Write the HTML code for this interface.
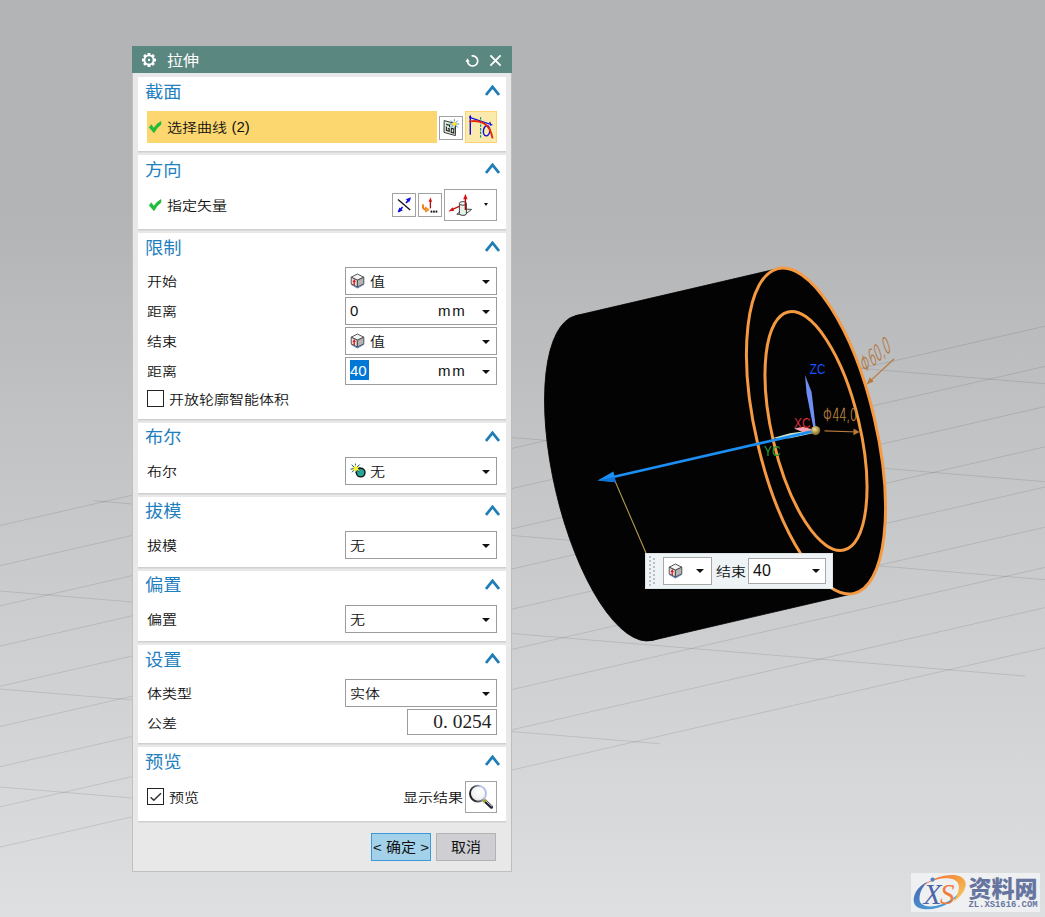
<!DOCTYPE html>
<html lang="zh-CN">
<head>
<meta charset="utf-8">
<title>拉伸</title>
<style>
html,body{margin:0;padding:0;}
body{width:1045px;height:917px;overflow:hidden;position:relative;
  font-family:"Liberation Sans","Noto Sans CJK SC",sans-serif;font-size:15px;color:#111;
  background:linear-gradient(to bottom,#b3b4b6 0px,#b3b4b6 215px,#c3c4c6 450px,#d1d2d4 700px,#dedfe1 917px);}
#scene{position:absolute;left:0;top:0;width:1045px;height:917px;}
.abs{position:absolute;}
#dlg{position:absolute;left:132px;top:46px;width:380px;height:826px;background:#e8e8e8;box-sizing:border-box;
  border-left:1px solid #c0c0c0;border-right:1px solid #bdbdbd;border-bottom:1px solid #c0c0c0;}
#tbar{position:absolute;left:132px;top:46px;width:380px;height:27px;background:#5b8781;}
#tbar .ttl{position:absolute;left:35px;top:1px;height:27px;line-height:27px;font-size:16px;color:#fff;transform-origin:0 22px;transform:scaleY(0.95);}
.sec{position:absolute;left:138px;width:368px;background:#fff;box-shadow:0 1.5px 0 #cfcfcf;}
.st{position:absolute;left:144.5px;font-size:18px;line-height:24px;color:#1f80c0;white-space:nowrap;transform-origin:0 20px;transform:scale(1.015,0.95);}
.lb{position:absolute;font-size:15px;line-height:20px;color:#111;white-space:nowrap;transform-origin:0 17.4px;transform:scaleY(0.86);font-weight:350;}
.lat{transform:none !important;}
.chev{position:absolute;left:485px;width:15px;height:11px;}
.dd{position:absolute;left:345px;width:152px;height:28px;box-sizing:border-box;border:1px solid #9c9c9c;background:#fff;}
.dd .tx{position:absolute;top:3px;line-height:20px;font-size:15px;white-space:nowrap;transform-origin:0 17.4px;transform:scaleY(0.86);font-weight:350;}
.arr{position:absolute;width:0;height:0;border-left:4px solid transparent;border-right:4px solid transparent;border-top:4px solid #111;}
.ib{position:absolute;box-sizing:border-box;border:1px solid #a2a2a2;background:#fff;}
.cb{position:absolute;left:147px;width:17px;height:17px;box-sizing:border-box;border:1px solid #222;background:#fff;}
</style>
</head>
<body>
<svg id="scene" width="1045" height="917" viewBox="0 0 1045 917">
<g stroke="#000" stroke-opacity="0.1" stroke-width="1" fill="none">
<line x1="0.0" y1="525.5" x2="400.0" y2="433.8"/>
<line x1="0.0" y1="565.7" x2="1045.0" y2="326.2"/>
<line x1="0.0" y1="605.9" x2="1045.0" y2="366.4"/>
<line x1="0.0" y1="646.1" x2="1045.0" y2="406.6"/>
<line x1="0.0" y1="686.3" x2="1045.0" y2="446.8"/>
<line x1="0.0" y1="726.5" x2="1045.0" y2="487.0"/>
<line x1="0.0" y1="766.7" x2="1045.0" y2="527.2"/>
<line x1="0.0" y1="806.9" x2="1045.0" y2="567.4"/>
<line x1="0.0" y1="847.1" x2="1045.0" y2="607.6"/>
<line x1="300.0" y1="818.5" x2="1045.0" y2="647.8"/>
<line x1="734.0" y1="357.9" x2="1045.0" y2="383.7"/>
<line x1="420.0" y1="429.9" x2="1045.0" y2="481.7"/>
<line x1="94.0" y1="500.8" x2="1045.0" y2="579.7"/>
<line x1="0.0" y1="591.0" x2="1025.0" y2="676.1"/>
<line x1="0.0" y1="689.0" x2="660.0" y2="743.8"/>
<line x1="0.0" y1="787.0" x2="330.0" y2="814.4"/>
</g>

<g id="model">
<g fill="#030303" stroke="#030303" stroke-width="0.8">
<ellipse cx="614" cy="478" rx="59.7" ry="166.8" transform="rotate(-13.19 614 478)"/>
<ellipse cx="816" cy="431" rx="59.7" ry="166.8" transform="rotate(-13.19 816 431)"/>
<polygon points="575.9,315.6 777.9,268.6 854.1,593.4 652.1,640.4"/>
</g>
<g fill="none" stroke="#f59a42" stroke-width="3">
<ellipse cx="816" cy="431" rx="59.7" ry="166.8" transform="rotate(-13.19 816 431)"/>
<ellipse cx="816" cy="431" rx="43.8" ry="122.3" transform="rotate(-13.19 816 431)"/>
</g>
</g>
<defs>
<radialGradient id="gold" cx="0.4" cy="0.35" r="0.7"><stop offset="0" stop-color="#f0e0a0"/><stop offset="0.5" stop-color="#b89c50"/><stop offset="1" stop-color="#6a5520"/></radialGradient>
<linearGradient id="bshaft" x1="0" y1="0" x2="0" y2="1"><stop offset="0" stop-color="#2aa0ff"/><stop offset="1" stop-color="#0b7ae6"/></linearGradient>
</defs>
<!-- thin leader line -->
<line x1="615" y1="481" x2="646" y2="553" stroke="#b39a4a" stroke-width="1.1"/>
<!-- Y cone (pale green) -->
<polygon points="814,430 790,433.2 772,438.2 790,438.2 814,433" fill="#cfe6c4"/>
<!-- X cone (pink) -->
<polygon points="794,428.6 803,426.8 812,429.2 812,431.4 803,432.2" fill="#f3a2ac"/>
<!-- blue direction arrow -->
<line x1="815.6" y1="430.6" x2="613" y2="477" stroke="#1c8ff5" stroke-width="2.7"/>
<polygon points="597.5,480.6 613.4,471.6 615.8,482.2" fill="#1c8ff5"/>
<polygon points="597.5,480.6 614.6,477 615.8,482.2" fill="#0f74d6"/>
<!-- Z cone -->
<polygon points="805,375 811.6,392 815.8,428 813.4,428 806.6,393.5" fill="#6f8ff6"/>
<!-- origin sphere -->
<circle cx="815.6" cy="430.6" r="4.6" fill="url(#gold)"/>
<!-- axis labels -->
<g font-family="Liberation Sans, sans-serif" font-size="14.3">
<text x="809.8" y="374" fill="#1450ff" textLength="15.5" lengthAdjust="spacingAndGlyphs">ZC</text>
<text x="794" y="427.5" fill="#d62a38" textLength="16.5" lengthAdjust="spacingAndGlyphs">XC</text>
<text x="764" y="456.3" fill="#2aa12e" textLength="16.5" lengthAdjust="spacingAndGlyphs">YC</text>
</g>
<!-- dimensions -->
<g fill="none" stroke="#b8793c" stroke-width="1.2">
<line x1="824.5" y1="430.8" x2="858" y2="432"/>
<line x1="894" y1="359" x2="868.5" y2="382.6"/>
</g>
<polygon points="859.5,432 853.6,428.6 853.4,435.2" fill="#b8793c"/>
<polygon points="866.6,384.4 873.6,381.6 869.8,377.2" fill="#b8793c"/>
<text x="0" y="0" font-family="DejaVu Sans, Liberation Sans, sans-serif" font-weight="200" font-size="17" fill="#c08844" stroke="#c08844" stroke-width="0.35" textLength="34" lengthAdjust="spacingAndGlyphs" transform="translate(823 421.3)">Φ44,0</text>
<text x="0" y="0" font-family="DejaVu Sans, Liberation Sans, sans-serif" font-weight="200" font-size="17" fill="#b2763a" stroke="#b2763a" stroke-width="0.35" textLength="36" lengthAdjust="spacingAndGlyphs" transform="matrix(0.766 -0.643 0.42 1.2 864.2 373.4)">Φ60,0</text>
<!--TRIAD2-->
</svg>
<div id="dlg"></div>
<div id="tbar"><span class="ttl">拉伸</span></div>
<!-- section backgrounds -->
<div class="sec" style="top:77px;height:74px"></div>
<div class="sec" style="top:155px;height:74px"></div>
<div class="sec" style="top:233px;height:186px"></div>
<div class="sec" style="top:423px;height:70px"></div>
<div class="sec" style="top:497px;height:70px"></div>
<div class="sec" style="top:571px;height:70px"></div>
<div class="sec" style="top:645px;height:98px"></div>
<div class="sec" style="top:747px;height:74px"></div>

<!-- section titles -->
<div class="st" style="top:80px">截面</div>
<div class="st" style="top:158px">方向</div>
<div class="st" style="top:236px">限制</div>
<div class="st" style="top:425px">布尔</div>
<div class="st" style="top:499px">拔模</div>
<div class="st" style="top:573px">偏置</div>
<div class="st" style="top:648px">设置</div>
<div class="st" style="top:750px">预览</div>

<!-- chevrons -->
<svg class="chev" style="top:85px" viewBox="0 0 15 11"><path d="M1 10 L7.5 1.8 L14 10" fill="none" stroke="#1f7db5" stroke-width="2.7"/></svg>
<svg class="chev" style="top:163px" viewBox="0 0 15 11"><path d="M1 10 L7.5 1.8 L14 10" fill="none" stroke="#1f7db5" stroke-width="2.7"/></svg>
<svg class="chev" style="top:241px" viewBox="0 0 15 11"><path d="M1 10 L7.5 1.8 L14 10" fill="none" stroke="#1f7db5" stroke-width="2.7"/></svg>
<svg class="chev" style="top:431px" viewBox="0 0 15 11"><path d="M1 10 L7.5 1.8 L14 10" fill="none" stroke="#1f7db5" stroke-width="2.7"/></svg>
<svg class="chev" style="top:505px" viewBox="0 0 15 11"><path d="M1 10 L7.5 1.8 L14 10" fill="none" stroke="#1f7db5" stroke-width="2.7"/></svg>
<svg class="chev" style="top:579px" viewBox="0 0 15 11"><path d="M1 10 L7.5 1.8 L14 10" fill="none" stroke="#1f7db5" stroke-width="2.7"/></svg>
<svg class="chev" style="top:653px" viewBox="0 0 15 11"><path d="M1 10 L7.5 1.8 L14 10" fill="none" stroke="#1f7db5" stroke-width="2.7"/></svg>
<svg class="chev" style="top:755px" viewBox="0 0 15 11"><path d="M1 10 L7.5 1.8 L14 10" fill="none" stroke="#1f7db5" stroke-width="2.7"/></svg>

<!-- S1: 截面 -->
<div class="abs" style="left:147px;top:111px;width:290px;height:32px;background:#fcd76f"></div>
<div class="lb" style="left:167px;top:117px">选择曲线</div><div class="lb lat" style="left:231.5px;top:117px">(2)</div>
<div class="ib" style="left:439px;top:116px;width:24px;height:24px"></div>
<div class="abs" style="left:465px;top:111px;width:32px;height:32px;box-sizing:border-box;background:#fbeaab;border:1px solid #fcd36c"></div>

<!-- S2: 方向 -->
<div class="lb" style="left:167px;top:195px">指定矢量</div>
<div class="ib" style="left:392px;top:193px;width:24px;height:24px"></div>
<div class="ib" style="left:418px;top:193px;width:24px;height:24px"></div>
<div class="ib" style="left:444px;top:189px;width:53px;height:32px"></div>
<div class="arr" style="left:484px;top:203px;border-left-width:2.75px;border-right-width:2.75px;border-top-width:3px"></div>

<!-- S3: 限制 -->
<div class="lb" style="left:147px;top:271px">开始</div>
<div class="lb" style="left:147px;top:301px">距离</div>
<div class="lb" style="left:147px;top:331px">结束</div>
<div class="lb" style="left:147px;top:361px">距离</div>
<div class="dd" style="top:267px"><span class="tx" style="left:24px">值</span><div class="arr" style="left:136px;top:12px"></div></div>
<div class="dd" style="top:297px"><span class="tx lat" style="left:4px">0</span><span class="tx lat" style="left:92px;letter-spacing:1.8px">mm</span><div class="arr" style="left:136px;top:12px"></div></div>
<div class="dd" style="top:327px"><span class="tx" style="left:24px">值</span><div class="arr" style="left:136px;top:12px"></div></div>
<div class="dd" style="top:357px"><div class="abs" style="left:4px;top:2px;width:19px;height:20px;background:#0078d7"></div><span class="tx lat" style="left:4px;color:#fff">40</span><span class="tx lat" style="left:92px;letter-spacing:1.8px">mm</span><div class="arr" style="left:136px;top:12px"></div></div>
<div class="cb" style="top:390px"></div>
<div class="lb" style="left:169px;top:389px">开放轮廓智能体积</div>

<!-- S4: 布尔 -->
<div class="lb" style="left:147px;top:461px">布尔</div>
<div class="dd" style="top:457px"><span class="tx" style="left:24px">无</span><div class="arr" style="left:136px;top:12px"></div></div>

<!-- S5: 拔模 -->
<div class="lb" style="left:147px;top:535px">拔模</div>
<div class="dd" style="top:531px"><span class="tx" style="left:4px">无</span><div class="arr" style="left:136px;top:12px"></div></div>

<!-- S6: 偏置 -->
<div class="lb" style="left:147px;top:609px">偏置</div>
<div class="dd" style="top:605px"><span class="tx" style="left:4px">无</span><div class="arr" style="left:136px;top:12px"></div></div>

<!-- S7: 设置 -->
<div class="lb" style="left:147px;top:683px">体类型</div>
<div class="dd" style="top:679px"><span class="tx" style="left:4px">实体</span><div class="arr" style="left:136px;top:12px"></div></div>
<div class="lb" style="left:147px;top:713px">公差</div>
<div class="ib" style="left:407px;top:709px;width:90px;height:26px;border-color:#9c9c9c"></div>
<div class="abs" id="tol" style="left:407px;top:709px;width:84.5px;height:26px;line-height:26px;text-align:right;font-family:'Liberation Serif','Noto Serif CJK SC',serif;font-size:19.4px;color:#222;white-space:nowrap">0<span style="letter-spacing:4.9px">.</span>0254</div>

<!-- S8: 预览 -->
<div class="cb" style="top:788px"></div>
<svg class="abs" style="left:147px;top:788px" width="17" height="17" viewBox="0 0 17 17"><path d="M3.6 9.2 L6.8 12.2 L14 5.2" fill="none" stroke="#333" stroke-width="1.5"/></svg>
<div class="lb" style="left:169px;top:787px">预览</div>
<div class="lb" style="left:403px;top:787px">显示结果</div>
<div class="ib" style="left:465px;top:781px;width:32px;height:32px"></div>

<!-- buttons -->
<div class="abs" style="left:371px;top:833px;width:60px;height:28px;box-sizing:border-box;background:#a3d1ea;border:1px solid #3b9bd9;text-align:center;line-height:26px;font-size:15px;white-space:nowrap"><span style="display:inline-block;transform-origin:0 20px;transform:scaleY(0.9)">&lt; 确定 &gt;</span></div>
<div class="abs" style="left:436px;top:833px;width:60px;height:28px;box-sizing:border-box;background:#cfcfd3;border:1px solid #b3b3b3;text-align:center;line-height:26px;font-size:15px;white-space:nowrap"><span style="display:inline-block;transform-origin:0 20px;transform:scaleY(0.9)">取消</span></div>
<!-- title bar icons -->
<svg class="abs" style="left:141px;top:52px" width="16" height="16" viewBox="0 0 16 16">
<g transform="translate(8 7.9)"><g fill="#fff">
<rect x="-1.5" y="-7" width="3" height="14" rx="0.5"/>
<rect x="-1.5" y="-7" width="3" height="14" rx="0.5" transform="rotate(45)"/>
<rect x="-1.5" y="-7" width="3" height="14" rx="0.5" transform="rotate(90)"/>
<rect x="-1.5" y="-7" width="3" height="14" rx="0.5" transform="rotate(135)"/>
<circle r="5.5"/></g>
<circle r="3.6" fill="#5b8781"/><rect x="-1" y="-1" width="2" height="2" fill="#fff"/></g></svg>
<svg class="abs" style="left:464px;top:52px" width="18" height="18" viewBox="0 0 18 18">
<path d="M7.6 3.9 A5.1 5.1 0 1 1 3.55 9.4" fill="none" stroke="#fff" stroke-width="1.7" stroke-linecap="butt"/>
<polygon points="1.4,9.8 3.5,6.2 5.7,9.8" fill="#fff"/></svg>
<svg class="abs" style="left:489px;top:54px" width="13" height="13" viewBox="0 0 13 13"><path d="M1.4 1.4 L11.6 11.6 M11.6 1.4 L1.4 11.6" stroke="#fff" stroke-width="1.9" fill="none"/></svg>

<!-- green checks -->
<svg class="abs" style="left:148px;top:120px" width="15" height="15" viewBox="0 0 15 15"><path d="M1.2 7.4 L3.3 4.7 L5.7 8.2 Q8.6 3.6 12.9 1.5 L13 4.4 Q8.6 7.4 6 12.8 Z" fill="#1cc038" stroke="#14a42e" stroke-width="0.5"/></svg>
<svg class="abs" style="left:148px;top:198px" width="15" height="15" viewBox="0 0 15 15"><path d="M1.2 7.4 L3.3 4.7 L5.7 8.2 Q8.6 3.6 12.9 1.5 L13 4.4 Q8.6 7.4 6 12.8 Z" fill="#1cc038" stroke="#14a42e" stroke-width="0.5"/></svg>

<!-- sketch section icon (439,116) 24x24 -->
<svg class="abs" style="left:439px;top:116px" width="24" height="24" viewBox="0 0 24 24">
<polygon points="5.2,4.6 16.6,7.6 16.4,19.6 5,16.4" fill="#dcecdc" stroke="#3a3a3a" stroke-width="1"/>
<path d="M7.2 8.4 L10.6 9.2 L10.6 11.2 M7.4 10.4 L7.4 14.4 L10.2 15.2 L10.2 12.8 L8.8 12.6 M12.4 12.4 L14.8 13 L14.8 17 L12.2 16.4 Z" fill="none" stroke="#222" stroke-width="1.1"/>
<g stroke="#4a86d8" stroke-width="1"><path d="M15.4 3.2 L15.4 13 M10.6 8 L20.2 8 M12 4.6 L18.8 11.4 M18.8 4.6 L12 11.4"/></g>
<polygon points="15.4,4.6 16.5,7 19,8 16.5,9 15.4,11.6 14.3,9 11.8,8 14.3,7" fill="#ffe92e"/>
</svg>

<!-- curve icon (465,111) 32x32 -->
<svg class="abs" style="left:465px;top:111px" width="32" height="32" viewBox="0 0 32 32">
<path d="M5.3 5 L5.3 23.8" stroke="#0a0ae6" stroke-width="1.4" fill="none"/>
<path d="M4.6 6.4 L27.4 14 M24.8 10.8 L25.8 14.6" stroke="#0a0ae6" stroke-width="1.25" fill="none"/>
<polygon points="5.3,3.4 4,6.8 6.6,6.8" fill="#0a0ae6"/>
<ellipse cx="21.6" cy="19.8" rx="3.2" ry="5.1" fill="none" stroke="#0a0ae6" stroke-width="1.4" transform="rotate(6 21.6 19.8)"/>
<path d="M15.6 6.2 L15.6 27" stroke="#0a8a86" stroke-width="1.2" stroke-dasharray="2.4 1.2" fill="none"/>
<path d="M5.2 10.4 Q12 9.2 18 11.8 Q25 15 27.4 26.6" stroke="#e0280c" stroke-width="1.9" fill="none" stroke-linecap="round"/>
</svg>

<!-- reverse direction (392,193) -->
<svg class="abs" style="left:392px;top:193px" width="24" height="24" viewBox="0 0 24 24">
<path d="M6.6 18.6 L10.6 14 M14 10 L18 5.4" stroke="#1010d8" stroke-width="1.7" fill="none"/>
<polygon points="19,4.2 13.8,6.2 17.2,9.2" fill="#1010d8"/>
<polygon points="5.6,19.6 10.8,17.6 7.4,14.6" fill="#1010d8"/>
<path d="M6 6.4 L18.2 17" stroke="#111" stroke-width="1.3" fill="none"/>
</svg>

<!-- vector dialog (418,193) -->
<svg class="abs" style="left:418px;top:193px" width="24" height="24" viewBox="0 0 24 24">
<path d="M12.4 15.4 L12.4 7.4" stroke="#b00c0c" stroke-width="1.3" fill="none"/>
<polygon points="12.4,4.6 10.6,8.8 14.2,8.8" fill="#d01414"/>
<path d="M5 11.4 Q4.2 16.4 8 16.6" stroke="#f07818" stroke-width="2" fill="none"/>
<polygon points="7.6,14 11.2,16.8 7.6,19" fill="#f8b020" stroke="#e86a10" stroke-width="0.7"/>
<rect x="12.6" y="17.6" width="1.7" height="2" fill="#111"/><rect x="15.1" y="17.6" width="1.7" height="2" fill="#111"/><rect x="17.6" y="17.6" width="1.7" height="2" fill="#111"/>
</svg>

<!-- inferred vector (444,189) -->
<svg class="abs" style="left:444px;top:189px" width="40" height="32" viewBox="0 0 40 32">
<polygon points="12.8,25.2 19.6,20 27.6,20.4 20.8,25.8" fill="#f2f6f2" stroke="#333" stroke-width="0.9"/>
<path d="M15.4 14.4 L15.4 24.6 A3.5 1.8 0 0 0 22.4 24.6 L22.4 14.4" fill="#e4f3e4" stroke="#2a2a2a" stroke-width="0.9"/>
<ellipse cx="18.9" cy="14.4" rx="3.5" ry="1.8" fill="#f6fbf6" stroke="#2a2a2a" stroke-width="0.9"/>
<path d="M21.4 21 L21.4 9" stroke="#a80808" stroke-width="1.4" fill="none"/>
<polygon points="21.4,4.8 19.2,10.2 23.6,10.2" fill="#d81414"/>
<path d="M15.8 17.2 L8 20.6" stroke="#c01010" stroke-width="1.3" fill="none"/>
<polygon points="4.4,22.4 8.6,18.2 10.2,21.8" fill="#d01414"/>
</svg>
<!-- cube icons -->
<svg class="abs cube" style="left:350px;top:273px" width="15" height="16" viewBox="0 0 15 16">
<polygon points="1,11 7.4,14.6 14,11 14,11.8 7.4,15.6 1,11.8" fill="#4a78c8"/>
<polygon points="1.2,4.2 7.4,1 13.8,4.2 7.4,7.2" fill="#f4f4f4" stroke="#444" stroke-width="0.9" stroke-linejoin="round"/>
<polygon points="1.2,4.2 7.4,7.2 7.4,14 1.2,10.8" fill="#dedede" stroke="#444" stroke-width="0.9" stroke-linejoin="round"/>
<polygon points="13.8,4.2 7.4,7.2 7.4,14 13.8,10.8" fill="#b4b4b4" stroke="#444" stroke-width="0.9" stroke-linejoin="round"/>
<path d="M4.2 12 L4.2 8.4" stroke="#e81010" stroke-width="1.3"/><polygon points="4.2,6 2.6,9 5.8,9" fill="#e81010"/>
</svg>
<svg class="abs cube" style="left:350px;top:333px" width="15" height="16" viewBox="0 0 15 16">
<polygon points="1,11 7.4,14.6 14,11 14,11.8 7.4,15.6 1,11.8" fill="#4a78c8"/>
<polygon points="1.2,4.2 7.4,1 13.8,4.2 7.4,7.2" fill="#f4f4f4" stroke="#444" stroke-width="0.9" stroke-linejoin="round"/>
<polygon points="1.2,4.2 7.4,7.2 7.4,14 1.2,10.8" fill="#dedede" stroke="#444" stroke-width="0.9" stroke-linejoin="round"/>
<polygon points="13.8,4.2 7.4,7.2 7.4,14 13.8,10.8" fill="#b4b4b4" stroke="#444" stroke-width="0.9" stroke-linejoin="round"/>
<path d="M4.2 12 L4.2 8.4" stroke="#e81010" stroke-width="1.3"/><polygon points="4.2,6 2.6,9 5.8,9" fill="#e81010"/>
</svg>
<svg class="abs cube" style="left:668px;top:563px;z-index:5" width="15" height="16" viewBox="0 0 15 16">
<polygon points="1,11 7.4,14.6 14,11 14,11.8 7.4,15.6 1,11.8" fill="#4a78c8"/>
<polygon points="1.2,4.2 7.4,1 13.8,4.2 7.4,7.2" fill="#f4f4f4" stroke="#444" stroke-width="0.9" stroke-linejoin="round"/>
<polygon points="1.2,4.2 7.4,7.2 7.4,14 1.2,10.8" fill="#dedede" stroke="#444" stroke-width="0.9" stroke-linejoin="round"/>
<polygon points="13.8,4.2 7.4,7.2 7.4,14 13.8,10.8" fill="#b4b4b4" stroke="#444" stroke-width="0.9" stroke-linejoin="round"/>
<path d="M4.2 12 L4.2 8.4" stroke="#e81010" stroke-width="1.3"/><polygon points="4.2,6 2.6,9 5.8,9" fill="#e81010"/>
</svg>


<!-- bool none icon -->
<svg class="abs" style="left:349px;top:462px" width="18" height="18" viewBox="0 0 18 18">
<circle cx="11.7" cy="10.6" r="4.3" fill="#27a79a" stroke="#111" stroke-width="1.4"/>
<g stroke="#0a4a8c" stroke-width="1"><path d="M6.4 1.6 L6.8 11.2 M1.6 7.2 L11.4 5.6 M2.6 2.8 L10.4 10 M10.6 2.6 L3 10.2"/></g>
<polygon points="6.6,2.6 7.8,5.2 10.6,4.4 8.8,6.6 10.6,8.8 7.8,8.2 6.8,10.6 5.8,8 3,8.8 4.8,6.6 3,4.4 5.6,5.2" fill="#fff22a"/>
</svg>

<!-- magnifier -->
<svg class="abs" style="left:465px;top:781px" width="32" height="32" viewBox="0 0 32 32">
<defs><radialGradient id="lens" cx="0.62" cy="0.35" r="0.8"><stop offset="0" stop-color="#ffffff"/><stop offset="0.6" stop-color="#f2f2f2"/><stop offset="1" stop-color="#cfcfcf"/></radialGradient>
<linearGradient id="ring" x1="0" y1="0.6" x2="1" y2="0.3"><stop offset="0" stop-color="#16181c"/><stop offset="0.45" stop-color="#5a5e66"/><stop offset="0.8" stop-color="#b8c8ea"/><stop offset="1" stop-color="#a8bce6"/></linearGradient></defs>
<path d="M19.4 19.6 L26.4 26" stroke="#20242c" stroke-width="3.4" stroke-linecap="round"/>
<path d="M20.4 19.4 L26.8 25.2" stroke="#dfe3ea" stroke-width="1" stroke-linecap="round"/>
<path d="M18.4 18.6 L20.6 20.6" stroke="#e89a10" stroke-width="3.6"/>
<circle cx="13" cy="12.6" r="8" fill="url(#lens)" stroke="url(#ring)" stroke-width="1.9"/>
<circle cx="19.3" cy="19.6" r="0.9" fill="#30d040"/>
</svg>
<!--ICONS3-->
<div class="abs" style="left:645px;top:553px;width:188px;height:36px;box-sizing:border-box;background:#eef4f6;border:1px solid #dbe3e6"></div>
<svg class="abs" style="left:647px;top:555px" width="10" height="32" viewBox="0 0 10 32"><g fill="#b9c0c4"><rect x="2" y="1" width="2" height="2"/><rect x="6" y="3" width="2" height="2"/><rect x="2" y="5" width="2" height="2"/><rect x="6" y="7" width="2" height="2"/><rect x="2" y="9" width="2" height="2"/><rect x="6" y="11" width="2" height="2"/><rect x="2" y="13" width="2" height="2"/><rect x="6" y="15" width="2" height="2"/><rect x="2" y="17" width="2" height="2"/><rect x="6" y="19" width="2" height="2"/><rect x="2" y="21" width="2" height="2"/><rect x="6" y="23" width="2" height="2"/><rect x="2" y="25" width="2" height="2"/><rect x="6" y="27" width="2" height="2"/><rect x="2" y="29" width="2" height="2"/></g></svg>
<div class="ib" style="left:663px;top:557px;width:49px;height:28px;border-color:#a8a8a8"></div>
<div class="arr" style="left:696px;top:569px"></div>
<div class="lb" style="left:716px;top:561px">结束</div>
<div class="ib" style="left:748px;top:558px;width:78px;height:26px;border-color:#a8a8a8"></div>
<div class="lb lat" style="left:753px;top:561px;font-size:16px">40</div>
<div class="arr" style="left:812px;top:569px"></div>

<div class="abs" style="left:911px;top:873px;width:129px;height:39px;background:#eff0f1"></div>
<svg class="abs" style="left:911px;top:873px" width="129" height="39" viewBox="0 0 129 39">
<defs>
<linearGradient id="wmb" x1="0" y1="0" x2="1" y2="1"><stop offset="0" stop-color="#4a63ad"/><stop offset="1" stop-color="#49b4ea"/></linearGradient>
<linearGradient id="wmo" x1="0" y1="0" x2="1" y2="1"><stop offset="0" stop-color="#ee6a48"/><stop offset="0.5" stop-color="#f4a040"/><stop offset="1" stop-color="#f6cc66"/></linearGradient>
</defs>
<!-- blue crescent (left/bottom) -->
<path d="M17 8.5 C6 13 0.5 24 3.5 31 C7 38.5 25 38 38 30 C47 24.5 53 17 54 11 C50 20 41 27.500 30 31.500 C18 35.500 8.500 33 8.500 26 C8.500 19 12 13 17 8.500 Z" fill="url(#wmb)"/>
<!-- orange crescent (top/right) -->
<path d="M12 13 C20 5 36 0.500 46 2.500 C54 4 56.500 10 53.500 16.500 C51.500 21 47 26 42 29 C46 23 49 17 47.500 11.500 C46 5.500 36 4 26 6.500 C20 8 15 10.500 12 13 Z" fill="url(#wmo)"/>
<circle cx="21.6" cy="6.600" r="2.100" fill="#4f7fc4"/>
<text x="12.500" y="31" font-family="Liberation Serif, serif" font-style="italic" font-size="30" fill="#4a66a8" textLength="18" lengthAdjust="spacingAndGlyphs">X</text>
<text x="29" y="31" font-family="Liberation Serif, serif" font-style="italic" font-size="30" fill="#f07c3c" textLength="14.500" lengthAdjust="spacingAndGlyphs">S</text>
<text x="57.500" y="24.300" font-family="Noto Sans CJK SC, sans-serif" font-weight="900" font-size="23" fill="#66759f" textLength="69" lengthAdjust="spacingAndGlyphs">资料网</text>
<text x="57.500" y="34.200" font-family="Liberation Mono, monospace" font-weight="bold" font-size="8.600" fill="#66759f" textLength="69" lengthAdjust="spacingAndGlyphs">ZL.XS1616.COM</text>
</svg>

</body>
</html>
